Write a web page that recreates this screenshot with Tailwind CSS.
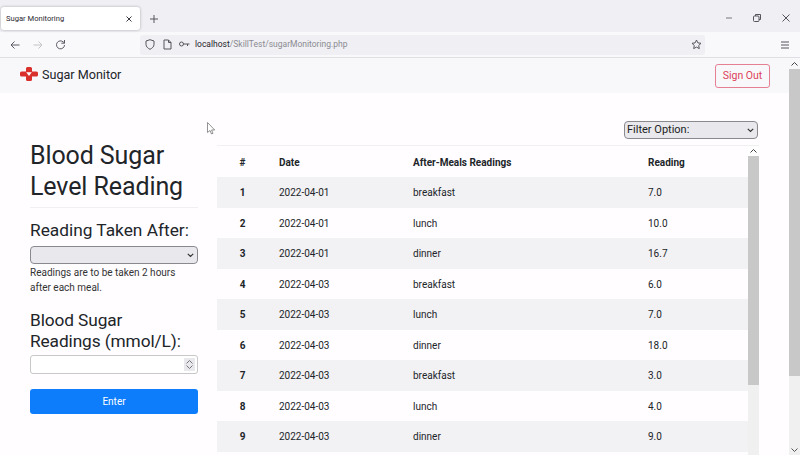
<!DOCTYPE html>
<html lang="en">
<head>
    <meta charset="UTF-8">
    <title>Sugar Monitoring</title>
    <script src="https://cdn.jsdelivr.net/npm/@tailwindcss/browser@4"></script>
</head>
<body class="relative h-[455px] w-[800px] overflow-hidden bg-[#fffdff] font-['Roboto',sans-serif] text-[#212529]">
    <!-- browser tabs -->
    <div class="flex h-[32px] items-start bg-[#f0f0f4]">
        <div class="ml-[1px] mt-[7px] flex h-[23px] w-[139px] items-center justify-between rounded-[3px] bg-white pl-[5px] pr-[7px] shadow-[0_0_3px_rgba(0,0,0,0.3)]">
            <span class="text-[7.600px] text-[#2b2a33]">Sugar Monitoring</span>
            <svg width="8" height="8" viewBox="0 0 8 8" fill="none" stroke="#3b3a42" stroke-width="1"><path d="M1.500 1.500l5 5M6.500 1.500l-5 5"/></svg>
        </div>
        <svg class="ml-[10px] mt-[15px]" width="8" height="8" viewBox="0 0 8 8" fill="none" stroke="#55545c" stroke-width="1"><path d="M4 0v8M0 4h8"/></svg>
        <div class="ml-auto mt-[14px] flex items-center gap-[20.500px] pr-[10.500px]">
            <svg width="8" height="8" viewBox="0 0 8 8" fill="none" stroke="#77767c" stroke-width="1"><path d="M1 4h6"/></svg>
            <svg width="8" height="8" viewBox="0 0 8 8" fill="none" stroke="#55545c" stroke-width="1"><rect x=".5" y="2" width="5.500" height="5.500" rx="1"/><path d="M2.500 2V.5h5v5H6"/></svg>
            <svg width="8" height="8" viewBox="0 0 8 8" fill="none" stroke="#55545c" stroke-width="1"><path d="M.5.500l7 7M7.500.500l-7 7"/></svg>
        </div>
    </div>
    <!-- browser toolbar -->
    <div class="flex h-[26px] items-center border-b border-[#e0e0e4] bg-[#f9f9fb]">
        <div class="flex w-[140px] items-center pl-[10px]">
            <svg width="10" height="10" viewBox="0 0 10 10" fill="none" stroke="#5b5b66" stroke-width="1"><path d="M9.500 5H1M4.500 1.500L1 5l3.500 3.500"/></svg>
            <svg class="ml-[13px]" width="10" height="10" viewBox="0 0 10 10" fill="none" stroke="#c4c4c8" stroke-width="1"><path d="M.5 5H9M5.500 1.500L9 5 5.500 8.500"/></svg>
            <svg class="ml-[12px]" width="11" height="11" viewBox="0 0 11 11" fill="none" stroke="#5b5b66" stroke-width="1"><path d="M9.500 6a4 4 0 1 1-1.200-3L9.500 4.200M9.500 1v3.200H6.300"/></svg>
        </div>
        <div class="flex h-[20px] w-[565px] items-center rounded-[3px] bg-[#f0f0f4] pl-[5px] pr-[3px]">
            <svg width="10" height="11" viewBox="0 0 10 11" fill="none" stroke="#55545c" stroke-width="1"><path d="M5 .7l4 1.300v3.500c0 2.300-2 3.800-4 4.800-2-1-4-2.500-4-4.800V2z"/></svg>
            <svg class="ml-[8px]" width="9" height="11" viewBox="0 0 9 11" fill="none" stroke="#55545c" stroke-width="1"><path d="M1 1h4.500L8 3.500V10H1zM5.500 1v2.500H8"/></svg>
            <svg class="ml-[7px]" width="11" height="7" viewBox="0 0 11 7" fill="none" stroke="#55545c" stroke-width="1"><circle cx="2.500" cy="3" r="2"/><path d="M4.500 3H10.500M8.500 3v2"/></svg>
            <span class="ml-[5px] text-[8.500px] text-[#8b8b92]"><span class="text-[#26252c]">localhost</span>/SkillTest/sugarMonitoring.php</span>
            <svg class="ml-auto" width="11" height="11" viewBox="0 0 11 11" fill="none" stroke="#55545c" stroke-width="1"><path d="M5.500 1l1.400 2.900 3.100.4-2.300 2.200.6 3.100-2.800-1.500-2.800 1.500.6-3.100L1 4.300l3.100-.4z"/></svg>
        </div>
        <svg class="ml-[76px]" width="8" height="8" viewBox="0 0 8 8" fill="none" stroke="#55545c" stroke-width="1"><path d="M0 1h8M0 4h8M0 7h8"/></svg>
    </div>
    <!-- page -->
    <div class="flex h-[397px]">
        <div class="min-w-0 flex-1">
            <nav class="flex h-[35px] items-center justify-between bg-[#f8f8fb] pl-[20px] pr-[19px]">
                <div class="flex items-center gap-[4px]">
                    <svg class="mb-[2px]" width="18" height="14" viewBox="0 0 18 14"><path fill="#d9302c" d="M6 1.500Q6 0 7.500 0h3Q12 0 12 1.500v3h4.500Q18 4.500 18 6v2q0 1.500-1.500 1.500H12v3q0 1.500-1.500 1.500h-3Q6 14 6 12.500v-3H1.500Q0 9.500 0 8V6q0-1.500 1.500-1.500H6z"/><path fill="#fff" d="M6.200 5.200h5.600L9 9z"/></svg>
                    <span class="text-[12.600px]">Sugar Monitor</span>
                </div>
                <button class="flex h-[24px] w-[55px] items-center justify-center rounded-[3px] border border-[#e57f92] text-[10.500px] text-[#dc3f5a]">Sign Out</button>
            </nav>
            <div class="flex">
                <!-- form column -->
                <div class="ml-[30px] mt-[47px] w-[168px]">
                    <h1 class="border-b border-[#f0f0f0] pb-[5px] text-[25px] leading-[31px] tracking-[-0.1px]">Blood Sugar<br>Level Reading</h1>
                    <div class="mt-[11px] text-[17.300px] leading-[22px]">Reading Taken After:</div>
                    <div class="relative mt-[5px]">
                        <select class="block h-[18px] w-[168px] appearance-none rounded-[4px] border border-[#8a8a8e] bg-[#e9e9ed] text-[11px]"></select>
                        <svg class="absolute right-[4px] top-[7px]" width="7" height="5" viewBox="0 0 7 5" fill="none" stroke="#333" stroke-width="1.200"><path d="M.8.800l2.700 2.700L6.200.800"/></svg>
                    </div>
                    <p class="mt-[1px] text-[10px] leading-[15px] text-[#333]">Readings are to be taken 2 hours<br>after each meal.</p>
                    <div class="mt-[15px] text-[17.300px] leading-[21px] tracking-[-0.1px]">Blood Sugar<br>Readings (mmol/L):</div>
                    <div class="mt-[3px] flex h-[19px] items-center justify-end rounded-[3px] border border-[#c8c8c8] bg-white pr-[2px]">
                        <div class="flex h-[13px] w-[11px] flex-col items-center justify-center gap-[1px] bg-[#e9e9ed]">
                            <svg width="7" height="4" viewBox="0 0 7 4" fill="none" stroke="#77767c"><path d="M.5 3.500l3-3 3 3"/></svg>
                            <svg width="7" height="4" viewBox="0 0 7 4" fill="none" stroke="#77767c"><path d="M.5.500l3 3 3-3"/></svg>
                        </div>
                    </div>
                    <button class="mt-[15px] h-[25px] w-full rounded-[3px] bg-[#0d7dfb] text-[10px] text-white">Enter</button>
                </div>
                <!-- readings column -->
                <div class="ml-[19px] w-[542px]">
                    <div class="flex justify-end pr-[1px] pt-[28px]">
                        <div class="relative">
                            <select class="block h-[18px] w-[134px] appearance-none rounded-[4px] border border-[#8a8a8e] bg-[#e9e9ed] pl-[2px] text-[11px] text-[#222]">
                                <option>Filter Option:</option>
                            </select>
                            <svg class="absolute right-[4px] top-[7px]" width="7" height="5" viewBox="0 0 7 5" fill="none" stroke="#333" stroke-width="1.200"><path d="M.8.800l2.700 2.700L6.200.800"/></svg>
                        </div>
                    </div>
                    <div class="mt-[6px] flex h-[310px] overflow-hidden border-t border-[#f0f0f0]">
                        <table class="h-fit w-[531px] table-fixed border-collapse text-[10px]">
                            <thead>
                                <tr class="h-[31px] font-bold">
                                    <th class="w-[62px] pr-[11px] pt-[1px] text-center">#</th>
                                    <th class="w-[134px] pt-[1px] text-left">Date</th>
                                    <th class="w-[235px] pt-[1px] text-left">After-Meals Readings</th>
                                    <th class="pt-[1px] text-left">Reading</th>
                                </tr>
                            </thead>
                            <tbody id="rows"></tbody>
                        </table>
                        <!-- table scrollbar -->
                        <div class="flex w-[11px] flex-col bg-[#f0f0f0]">
                            <div class="flex h-[10px] items-center justify-center bg-white">
                                <svg width="7" height="4" viewBox="0 0 7 4" fill="none" stroke="#444"><path d="M.5 3.500l3-3 3 3"/></svg>
                            </div>
                            <div class="h-[229px] bg-[#c8c8c8]"></div>
                        </div>
                    </div>
                </div>
            </div>
        </div>
        <!-- page scrollbar -->
        <div class="flex w-[11px] flex-col items-center bg-[#f0f0f0]">
            <div class="flex h-[11px] w-full items-center justify-center bg-[#f8f8fb]">
                <svg width="7" height="4" viewBox="0 0 7 4" fill="none" stroke="#444"><path d="M.5 3.500l3-3 3 3"/></svg>
            </div>
            <div class="h-[307px] w-full bg-[#c8c8c8]"></div>
            <svg class="mt-auto mb-[3px]" width="7" height="4" viewBox="0 0 7 4" fill="none" stroke="#555"><path d="M.5.500l3 3 3-3"/></svg>
        </div>
    </div>
    <!-- mouse pointer -->
    <svg class="absolute left-[207px] top-[122px]" width="9" height="13" viewBox="0 0 9 13" fill="#fff" stroke="#777" stroke-width="0.8"><path d="M.5.500v10l2.500-2 1.500 3.500 1.500-.7-1.500-3.300h3.200z"/></svg>
    <script>
        const readings = [
            ['2022-04-01', 'breakfast', '7.0'],
            ['2022-04-01', 'lunch', '10.0'],
            ['2022-04-01', 'dinner', '16.7'],
            ['2022-04-03', 'breakfast', '6.0'],
            ['2022-04-03', 'lunch', '7.0'],
            ['2022-04-03', 'dinner', '18.0'],
            ['2022-04-03', 'breakfast', '3.0'],
            ['2022-04-03', 'lunch', '4.0'],
            ['2022-04-03', 'dinner', '9.0']
        ];
        document.getElementById('rows').innerHTML = readings.map((r, i) => `
            <tr class="h-[30.500px] ${i % 2 === 0 ? 'bg-[#f2f1f3]' : ''}">
                <td class="pr-[11px] pt-[1px] text-center font-bold">${i + 1}</td>
                <td class="pt-[1px]">${r[0]}</td>
                <td class="pt-[1px]">${r[1]}</td>
                <td class="pt-[1px]">${r[2]}</td>
            </tr>`).join('');
    </script>
</body>
</html>
